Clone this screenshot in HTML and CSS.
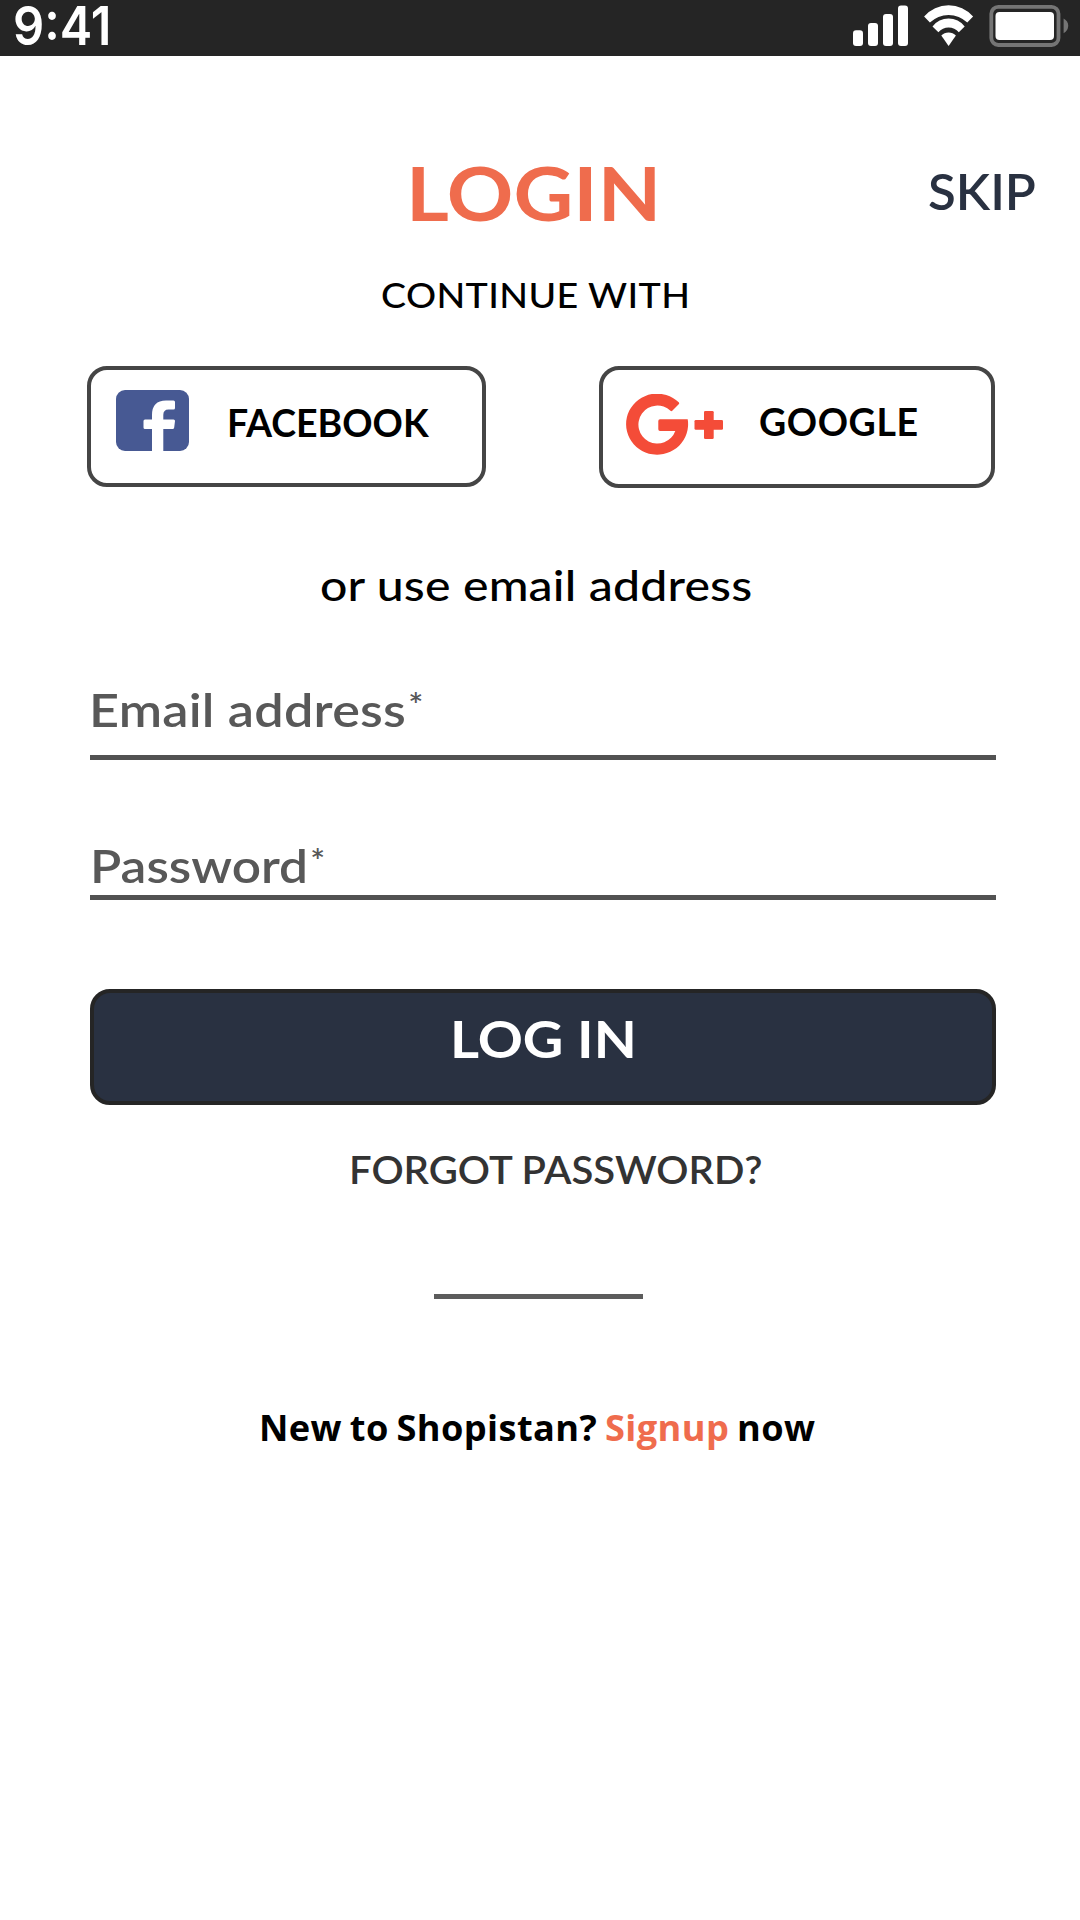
FILE: index.html
```
<!DOCTYPE html>
<html lang="en">
<head>
<meta charset="utf-8">
<title>Shopistan – Login</title>
<link rel="stylesheet" href="styles.css">
</head>
<body>
<div class="status-bar">
  <span class="clock">9:41</span>
  <svg class="status-icons" viewBox="850 0 230 56" width="230" height="56" aria-hidden="true">
    <g fill="#fff">
      <rect x="853" y="30.3" width="10" height="15.7" rx="3"/>
      <rect x="868" y="23" width="10" height="23" rx="3"/>
      <rect x="883" y="14" width="10" height="32" rx="3"/>
      <rect x="898" y="5.5" width="10" height="40.5" rx="3"/>
      <path d="M924.1 16.4A32.5 32.5 0 0 1 973.1 16.4L967.3 22.6A26.5 26.5 0 0 0 929.9 22.6Z"/>
      <path d="M932.5 26.5A20.2 20.2 0 0 1 964.7 26.5L958.8 32.3A13.4 13.4 0 0 0 938.4 32.3Z"/>
      <path d="M941.3 35.6A10 10 0 0 1 955.9 35.6L948.6 45.9Z"/>
      <rect x="995.5" y="12" width="58.5" height="28" rx="4"/>
    </g>
    <rect x="991.3" y="6.8" width="67.2" height="38.2" rx="7" fill="none" stroke="#757575" stroke-width="3.8"/>
    <path d="M1063.6 18.5Q1068.2 21 1068.2 25.8T1063.6 33.2Z" fill="#757575"/>
  </svg>
</div>
<main class="page">
  <header class="header">
    <h1 class="title text">LOGIN</h1>
    <a class="skip text">SKIP</a>
  </header>
  <p class="continue text">CONTINUE WITH</p>
  <div class="socials">
    <a class="social facebook">
      <svg width="73" height="61" viewBox="0 0 73 61" aria-hidden="true">
        <rect width="73" height="61" rx="9" fill="#475993"/>
        <path fill="#fff" d="M36 61V39H29q-1.5 0-1.5-1.5V31q0-1.5 1.5-1.5H36V25Q36 10.5 50 10.5H57.5q1.5 0 1.5 1.5V18q0 1.5-1.5 1.5H52.5Q47.3 19.5 47.3 25V29.5H57.5q1.6 0 1.5 1.5L58.2 37.5q-.2 1.5-1.7 1.5H47.3V61Z"/>
      </svg>
      <span class="social-name">FACEBOOK</span>
    </a>
    <a class="social google">
      <svg width="97" height="61" viewBox="0 0 97 61" aria-hidden="true">
        <g fill="#f44c38">
          <path d="M52.7 8.3q1 1 0 2L46.5 16.6q-1 1-2 .2A19 19 0 1 0 49.3 37H34q-1.7 0-1.7-1.7V27q0-1.7 1.7-1.7H61.7A31 30.5 0 1 1 52.7 8.3Z"/>
          <rect x="78" y="17" width="9.7" height="28" rx="1.3"/>
          <rect x="68.5" y="26" width="28.5" height="9.7" rx="1.3"/>
        </g>
      </svg>
      <span class="social-name">GOOGLE</span>
    </a>
  </div>
  <p class="alternative text">or use email address</p>
  <form class="form">
    <div class="field email"><span class="label text">Email address<span class="star">*</span></span></div>
    <div class="field password"><span class="label text">Password<span class="star">*</span></span></div>
    <div class="submit" role="button"><span class="submit-label text">LOG IN</span></div>
  </form>
  <a class="forgot text">FORGOT PASSWORD?</a>
  <hr class="rule">
  <p class="signup">New to Shopistan? <a class="signup-link">Signup</a> now</p>
</main>
</body>
</html>
```
FILE: styles.css
```
* { box-sizing: border-box; }

body {
  margin: 0;
  min-height: 1920px;
  background: #fff;
  color: #000;
  font-family: Lato, "Open Sans", sans-serif;
}

h1, p { margin: 0; }

/* Wide-set text, stretched from its left edge */
.text {
  display: block;
  width: max-content;
  white-space: nowrap;
  transform-origin: left center;
}

.status-bar {
  display: flex;
  justify-content: space-between;
  height: 56px;
  padding-left: 13px;
  background: #252525;
  color: #fff;
}

.clock {
  font: 600 53.6px/52px Inter, sans-serif;
  transform: scaleX(.91);
  transform-origin: left center;
}

.header {
  display: flex;
  align-items: flex-start;
  padding: 91px 0 0 406px;
}

.title {
  flex: 0 0 522px;
  color: #ef6c4d;
  font-size: 75px;
  font-weight: 700;
  line-height: 91px;
  transform: scaleX(1.1);
}

.skip {
  margin-top: 14px;
  color: #293141;
  font-size: 49px;
  font-weight: 600;
  line-height: 61px;
  transform: scaleX(1.04);
}

.continue {
  margin: 37px 0 0 381px;
  font-size: 34px;
  font-weight: 500;
  line-height: 40px;
  letter-spacing: .35px;
  transform: scaleX(1.105);
}

.socials {
  display: flex;
  align-items: flex-start;
  gap: 113px;
  padding: 51px 0 0 87px;
}

.social {
  display: flex;
  align-items: flex-start;
  border: 4px solid #454545;
  border-radius: 20px;
}

.facebook {
  width: 399px;
  height: 121px;
  padding: 20px 0 0 25px;
  gap: 38px;
}

.google {
  width: 396px;
  height: 122px;
  padding: 24px 0 0 23px;
  gap: 36px;
}

.social-name {
  margin-top: 10px;
  font-size: 37.5px;
  font-weight: 700;
  line-height: 45px;
}

.google .social-name {
  margin-top: 5px;
  letter-spacing: .6px;
}

.alternative {
  margin: 72px 0 0 320px;
  font-size: 42px;
  font-weight: 500;
  line-height: 50px;
  letter-spacing: .15px;
  transform: scaleX(1.147);
}

.form { padding: 71px 84px 0 90px; }

.field { border-bottom: 5px solid #525252; }

.email { height: 79px; }

.password {
  height: 63px;
  margin-top: 77px;
}

.label {
  margin-left: -1px;
  color: #585858;
  font-size: 47px;
  font-weight: 600;
  line-height: 56px;
  letter-spacing: .2px;
  transform: scaleX(1.11);
}

.password .label {
  margin-left: 0;
  letter-spacing: 0;
  transform: scaleX(1.093);
}

.star {
  margin-left: 2px;
  font-size: 32px;
  line-height: 0;
  vertical-align: 10px;
}

.submit {
  height: 116px;
  margin-top: 89px;
  padding: 16px 0 0 356px;
  border: 4px solid #252525;
  border-radius: 20px;
  background: #293141;
  color: #fff;
}

.submit-label {
  font-size: 51px;
  font-weight: 700;
  line-height: 60px;
  transform: scaleX(1.097);
}

.forgot {
  margin: 41px 0 0 349px;
  color: #333;
  font-size: 38.5px;
  font-weight: 600;
  line-height: 46px;
  transform: scaleX(1.04);
}

.rule {
  width: 209px;
  height: 5px;
  margin: 102px 0 0 434px;
  border: 0;
  background: #5c5c5c;
}

.signup {
  margin: 106px 0 0 259px;
  font: 700 36.2px/44px "Open Sans", sans-serif;
  letter-spacing: .4px;
  word-spacing: -2px;
}

.signup-link { color: #ef6c4d; }
```
